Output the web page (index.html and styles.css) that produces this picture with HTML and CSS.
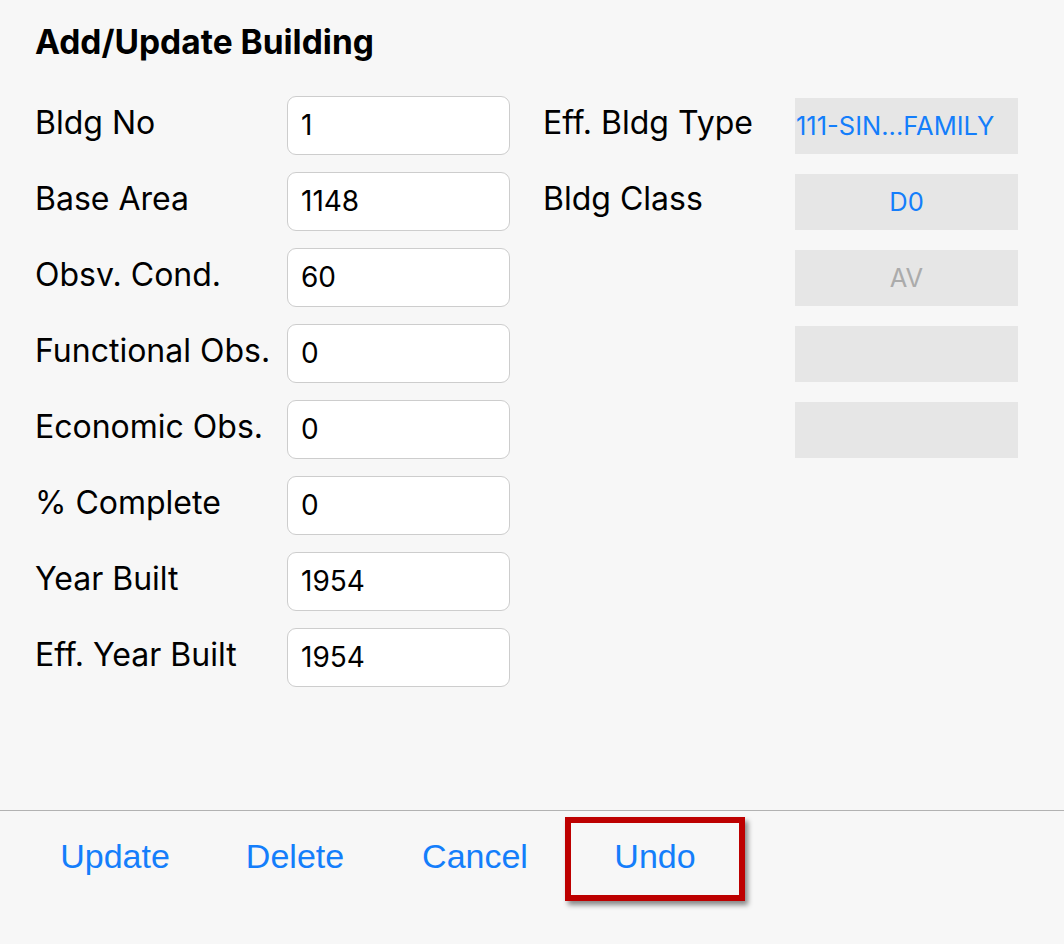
FILE: index.html
```html
<!DOCTYPE html>
<html>
<head>
<meta charset="utf-8">
<link rel="stylesheet" href="styles.css">
</head>
<body>
<div class="screen">
  <main class="main">
    <h1 class="title">Add/Update Building</h1>
    <div class="form">
      <div class="label">Bldg No</div>
      <div class="input">1</div>
      <div class="label label2">Eff. Bldg Type</div>
      <div class="pick pick-left">111-SIN...FAMILY</div>

      <div class="label">Base Area</div>
      <div class="input">1148</div>
      <div class="label label2">Bldg Class</div>
      <div class="pick">D0</div>

      <div class="label">Obsv. Cond.</div>
      <div class="input">60</div>
      <div class="label label2"></div>
      <div class="pick pick-disabled">AV</div>

      <div class="label">Functional Obs.</div>
      <div class="input">0</div>
      <div class="label label2"></div>
      <div class="pick"></div>

      <div class="label">Economic Obs.</div>
      <div class="input">0</div>
      <div class="label label2"></div>
      <div class="pick"></div>

      <div class="label">% Complete</div>
      <div class="input">0</div>
      <div class="label label2"></div>
      <div></div>

      <div class="label">Year Built</div>
      <div class="input">1954</div>
      <div class="label label2"></div>
      <div></div>

      <div class="label">Eff. Year Built</div>
      <div class="input">1954</div>
      <div class="label label2"></div>
      <div></div>
    </div>
  </main>
  <footer class="footer">
    <div class="btn">Update</div>
    <div class="btn">Delete</div>
    <div class="btn">Cancel</div>
    <div class="btn btn-highlight">Undo</div>
  </footer>
</div>
</body>
</html>
```

FILE: styles.css
```css
html, body {
  margin: 0;
  padding: 0;
  background: #f7f7f7;
}
.screen {
  width: 1064px;
  height: 944px;
  display: flex;
  flex-direction: column;
  font-family: Inter, "Noto Sans", sans-serif;
  color: #000;
}
.main {
  flex: 1;
  padding: 22px 0 0 35px;
}
.title {
  margin: 0;
  font-size: 33.5px;
  font-weight: 700;
  line-height: 40px;
  letter-spacing: 0;
}
.form {
  margin-top: 34px;
  display: grid;
  grid-template-columns: 252px 223px 285px 223px;
  grid-auto-rows: 59px;
  row-gap: 17px;
}
.label {
  font-size: 32px;
  display: flex;
  align-items: center;
  white-space: nowrap;
  padding-bottom: 7px;
  box-sizing: border-box;
}
.label2 {
  padding-left: 33px;
}
.input {
  box-sizing: border-box;
  background: #fff;
  border: 1px solid #cdcdcd;
  border-radius: 9px;
  font-size: 28px;
  display: flex;
  align-items: center;
  padding-left: 13px;
  padding-bottom: 2px;
}
.pick {
  align-self: center;
  height: 56px;
  background: #e6e6e6;
  color: #147efb;
  font-size: 25.5px;
  display: flex;
  align-items: center;
  justify-content: center;
}
.pick-left {
  justify-content: flex-start;
  padding-left: 1px;
}
.pick-disabled {
  color: #ababab;
}
.footer {
  height: 134px;
  box-sizing: border-box;
  border-top: 1px solid #b2b2b2;
  display: flex;
  padding: 6px 0 0 25px;
  align-items: flex-start;
}
.btn {
  width: 180px;
  height: 84px;
  box-sizing: border-box;
  border: 6px solid transparent;
  display: flex;
  align-items: center;
  justify-content: center;
  padding-bottom: 6px;
  font-family: "Liberation Sans", Arial, sans-serif;
  font-size: 34px;
  color: #147efb;
}
.btn-highlight {
  border-color: #bd0000;
  box-shadow: 3px 4px 5px rgba(0, 0, 0, 0.45);
}
```
